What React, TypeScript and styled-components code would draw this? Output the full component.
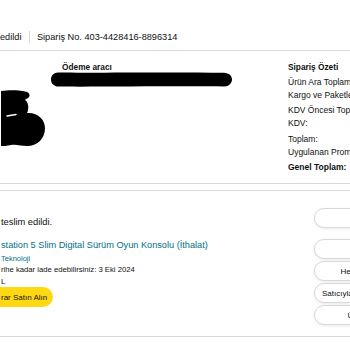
import React from "react";
import styled, { createGlobalStyle } from "styled-components";

const GlobalStyle = createGlobalStyle`
  html, body { margin: 0; padding: 0; background: #ffffff; overflow: hidden; }
  body { font-family: "Liberation Sans", Arial, sans-serif; color: #0f1111; }
  * { box-sizing: border-box; }
`;

const Page = styled.div`
  width: 350px;
  padding-top: 31px;
`;

const HeaderRow = styled.div`
  display: flex;
  align-items: center;
  height: 12px;
  margin-bottom: 7px;
  font-size: 9.2px;
  line-height: 12px;
  white-space: nowrap;
`;

const Divider = styled.span`
  width: 1px;
  height: 12px;
  background: #d5d9d9;
  margin: 0 7px 0 7.5px;
`;

const Card = styled.section<{ $mt?: number }>`
  margin: ${(p) => p.$mt ?? 0}px -200px 0 -30px;
  padding: 0 10px 0 30px;
  border: 1px solid #d5d9d9;
  border-radius: 8px;
`;

const SummaryGrid = styled.div`
  display: grid;
  grid-template-columns: 50px 215px 220px;
  column-gap: 11px;
  padding: 11px 0 9.5px;
`;

const AddressCol = styled.div`
  padding-top: 28px;
`;

const PayCol = styled.div`
  display: flex;
  flex-direction: column;
`;

const Heading = styled.div`
  font-size: 8.3px;
  font-weight: 700;
  line-height: 10px;
  white-space: nowrap;
`;

const Redaction = styled.svg`
  display: block;
  margin-left: -11px;
`;

const SummaryCol = styled.div`
  display: flex;
  flex-direction: column;
`;

const SummaryGroup = styled.div<{ $mt: number }>`
  margin-top: ${(p) => p.$mt}px;
`;

const SummaryRow = styled.div<{ $bold?: boolean }>`
  font-size: 8.5px;
  line-height: 13px;
  font-weight: ${(p) => (p.$bold ? 700 : 400)};
  white-space: nowrap;
`;

const ShipmentGrid = styled.div`
  display: grid;
  grid-template-columns: 302px 128px;
  column-gap: 11px;
  padding-bottom: 11px;
`;

const ItemCol = styled.div`
  display: flex;
  flex-direction: column;
  align-items: flex-start;
  padding-top: 25px;
`;

const DeliveryTitle = styled.div`
  font-size: 9.3px;
  line-height: 12px;
  white-space: nowrap;
`;

const ProductLink = styled.a`
  margin-top: 11px;
  font-size: 9.2px;
  line-height: 12px;
  color: #007185;
  text-decoration: none;
  white-space: nowrap;
`;

const SellerLink = styled.a`
  margin-top: 1.5px;
  font-size: 7.5px;
  line-height: 11px;
  color: #007185;
  text-decoration: none;
`;

const InfoLine = styled.div<{ $size: number; $mt?: number }>`
  margin-top: ${(p) => p.$mt ?? 0}px;
  font-size: ${(p) => p.$size}px;
  line-height: 11px;
  color: #0f1111;
  white-space: nowrap;
`;

const BuyAgain = styled.button`
  margin-top: 0.5px;
  margin-left: -14px;
  height: 20px;
  padding: 0 6px 0 14px;
  border: none;
  border-radius: 10px;
  background: #ffd814;
  font-family: inherit;
  font-size: 8px;
  color: #0f1111;
  white-space: nowrap;
`;

const ActionCol = styled.div`
  display: flex;
  flex-direction: column;
  gap: 2px;
  padding-top: 17px;
`;

const ActionButton = styled.button<{ $mb?: number }>`
  height: 20px;
  margin-bottom: ${(p) => p.$mb ?? 0}px;
  padding: 0 7px;
  border: 1px solid #d5d9d9;
  border-radius: 10px;
  background: #ffffff;
  box-shadow: 0 1px 3px rgba(213, 217, 217, 0.5);
  font-family: inherit;
  font-size: 8px;
  color: #0f1111;
  text-align: center;
  white-space: nowrap;
`;

const AddressBlob = () => (
  <svg width="45" height="58" viewBox="0 0 45 58">
    <path
      d="M0 1 C8 0 20 0 26 2 C30 4 29 8 25 9 L24 10 C28 12 28 20 26 23 C36 22 44 29 44 38 C44 49 36 56 26 56 C20 56 15 54 10 55 C6 56 2 56 0 56 Z"
      fill="#000"
    />
    <path d="M6 26 L15 24.5" stroke="#fff" strokeWidth="1.4" strokeLinecap="round" />
  </svg>
);

export default function App() {
  return (
    <>
      <GlobalStyle />
      <Page>
        <HeaderRow>
          <span>edildi</span>
          <Divider />
          <span>Sipariş No. 403-4428416-8896314</span>
        </HeaderRow>

        <Card>
          <SummaryGrid>
            <AddressCol>
              <AddressBlob />
            </AddressCol>
            <PayCol>
              <Heading>Ödeme aracı</Heading>
              <Redaction width="181" height="15" viewBox="0 0 181 15">
                <path
                  d="M7 0.5 C40 1 120 0 173 0.8 C178 1 181 4 181 7.5 C181 11 178 14.5 173 14.5 C120 14 40 15 7.5 14.6 C3 14.5 0 11.5 0 7.5 C0 3.5 3 0.5 7 0.5 Z"
                  fill="#000"
                />
              </Redaction>
            </PayCol>
            <SummaryCol>
              <Heading>Sipariş Özeti</Heading>
              <SummaryGroup $mt={3.5}>
                <SummaryRow>Ürün Ara Toplamı:</SummaryRow>
                <SummaryRow>Kargo ve Paketleme:</SummaryRow>
              </SummaryGroup>
              <SummaryGroup $mt={2}>
                <SummaryRow>KDV Öncesi Toplam:</SummaryRow>
                <SummaryRow>KDV:</SummaryRow>
              </SummaryGroup>
              <SummaryGroup $mt={3}>
                <SummaryRow>Toplam:</SummaryRow>
                <SummaryRow>Uygulanan Promosyon:</SummaryRow>
              </SummaryGroup>
              <SummaryGroup $mt={2}>
                <SummaryRow $bold>Genel Toplam:</SummaryRow>
              </SummaryGroup>
            </SummaryCol>
          </SummaryGrid>
        </Card>

        <Card $mt={6}>
          <ShipmentGrid>
            <ItemCol>
              <DeliveryTitle>teslim edildi.</DeliveryTitle>
              <ProductLink href="#">station 5 Slim Digital Sürüm Oyun Konsolu (İthalat)</ProductLink>
              <SellerLink href="#">Teknoloji</SellerLink>
              <InfoLine $size={7.7}>rihe kadar iade edebilirsiniz: 3 Eki 2024</InfoLine>
              <InfoLine $size={8} $mt={1}>L</InfoLine>
              <BuyAgain>rar Satın Alın</BuyAgain>
            </ItemCol>
            <ActionCol>
              <ActionButton $mb={9}>Kargo takibi</ActionButton>
              <ActionButton>Ürünü iade et</ActionButton>
              <ActionButton>Hediye fişini paylaşın</ActionButton>
              <ActionButton>Satıcıyla ilgili geri bildirim bırakın</ActionButton>
              <ActionButton>Ürün yorumu yaz</ActionButton>
            </ActionCol>
          </ShipmentGrid>
        </Card>
      </Page>
    </>
  );
}
